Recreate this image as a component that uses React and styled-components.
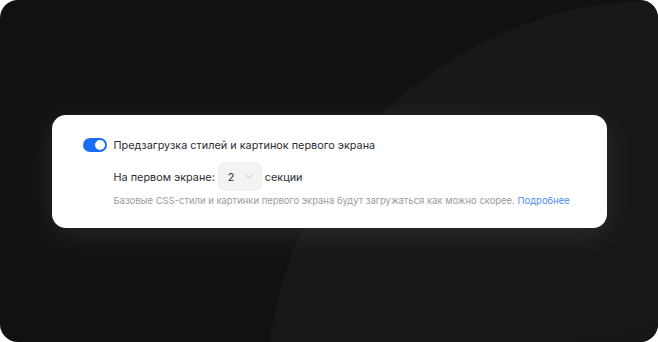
import React, { useState } from 'react';
import styled, { createGlobalStyle } from 'styled-components';

const GlobalStyle = createGlobalStyle`
  html, body {
    margin: 0;
    padding: 0;
    background: #ffffff;
  }
  body {
    font-family: Inter, "Noto Sans", sans-serif;
  }
`;

const Stage = styled.div`
  position: relative;
  width: 658px;
  height: 342px;
  border-radius: 18px;
  background-color: #111111;
  overflow: hidden;
  display: flex;
  align-items: flex-start;
  justify-content: center;
  padding-top: 115px;
  box-sizing: border-box;
`;

// large faint circle in the background
const Glow = styled.div`
  position: absolute;
  left: 267px;
  top: 1px;
  width: 782px;
  height: 782px;
  border-radius: 50%;
  background: linear-gradient(160deg, #181818 0%, #161616 60%, #131313 100%);
`;

const Card = styled.div`
  position: relative;
  width: 555px;
  height: 113px;
  box-sizing: border-box;
  padding: 23px 31px 0;
  background: #ffffff;
  border-radius: 14px;
  box-shadow: 0 6px 30px rgba(255, 255, 255, 0.1);
`;

const Row = styled.div`
  display: flex;
  align-items: center;
  gap: ${({ gap }) => gap || 0}px;
  height: ${({ h }) => h}px;
  margin-top: ${({ mt }) => mt || 0}px;
`;

const Body = styled.div`
  margin-left: 31px;
  display: flex;
  flex-direction: column;
`;

const Switch = styled.button`
  position: relative;
  width: 24px;
  height: 14px;
  padding: 0;
  border: none;
  border-radius: 7px;
  background: ${({ on }) => (on ? '#1b6ef3' : '#d0d4da')};
  cursor: pointer;

  &::after {
    content: '';
    position: absolute;
    top: 2px;
    left: ${({ on }) => (on ? '12px' : '2px')};
    width: 10px;
    height: 10px;
    border-radius: 50%;
    background: #fff;
  }
`;

const Label = styled.span`
  font-size: 10.85px;
  color: #2b2d31;
`;

const Select = styled.div`
  display: flex;
  align-items: center;
  justify-content: space-between;
  width: 44px;
  height: 29px;
  box-sizing: border-box;
  padding: 0 9px 0 10px;
  background: #f2f3f5;
  border-radius: 6px;
  font-size: 10.85px;
  color: #2b2d31;
`;

const Hint = styled.div`
  margin-top: 4px;
  font-size: 9.45px;
  color: #9a9ca1;
  white-space: nowrap;
`;

const More = styled.a`
  color: #4b8ef0;
  text-decoration: none;
`;

const Chevron = () => (
  <svg width="8" height="5" viewBox="0 0 8 5" fill="none">
    <path d="M0.8 0.8L4 4L7.2 0.8" stroke="#c4c7cc" strokeWidth="1" strokeLinecap="round" strokeLinejoin="round" />
  </svg>
);

const App = () => {
  const [on, setOn] = useState(true);

  return (
    <>
      <GlobalStyle />
      <Stage>
        <Glow />
        <Card>
          <Row h={14} gap={7}>
            <Switch on={on} onClick={() => setOn(!on)} />
            <Label>Предзагрузка стилей и картинок первого экрана</Label>
          </Row>
          <Body>
            <Row h={29} gap={3} mt={10}>
              <Label>На первом экране:</Label>
              <Select>
                <span>2</span>
                <Chevron />
              </Select>
              <Label>секции</Label>
            </Row>
            <Hint>
              Базовые CSS-стили и картинки первого экрана будут загружаться как можно скорее.{' '}
              <More href="#">Подробнее</More>
            </Hint>
          </Body>
        </Card>
      </Stage>
    </>
  );
};

export default App;
